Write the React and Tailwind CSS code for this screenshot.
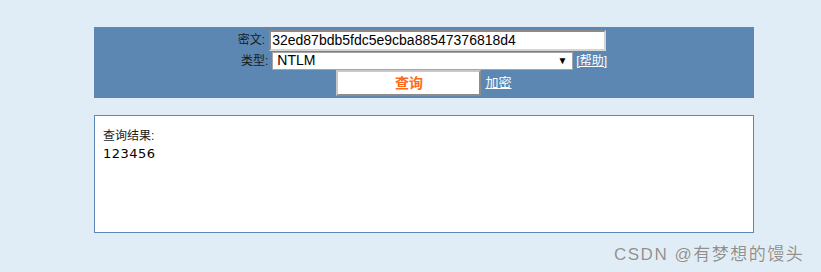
import React from 'react';

const App = () => {
  return (
    <div className="w-[821px] h-[272px] bg-[#e1edf6] relative overflow-hidden" style={{ fontFamily: '"Liberation Sans", "Noto Sans CJK SC", sans-serif' }}>
      <div className="ml-[94px] pt-[27px] w-[660px]">
        <div className="bg-[#5b87b2] h-[71px] pt-[3px] flex flex-col items-center">
          <div className="flex items-center h-[20px] mr-[4px]">
            <span className="text-[12px] text-[#1a1a1a] mr-[4px]">密文:</span>
            <div className="w-[337px] h-[21px] bg-white border-2 border-t-[#8a8a8a] border-l-[#8a8a8a] border-b-[#d4d4d4] border-r-[#d4d4d4] flex items-center px-[1px] text-[14px] text-black">
              32ed87bdb5fdc5e9cba88547376818d4
            </div>
          </div>
          <div className="flex items-center h-[19px] mt-[1px]">
            <span className="text-[12px] text-[#1a1a1a] mr-[4px]">类型:</span>
            <div className="w-[301px] h-[18px] bg-white border border-[#a5a5a5] flex items-center justify-between pl-[4px] pr-[5px] text-[14px] text-black">
              <span>NTLM</span>
              <span className="text-[10px]">▼</span>
            </div>
            <a className="ml-[3px] text-[12px] text-white underline">[帮助]</a>
          </div>
          <div className="flex items-center">
            <div className="w-[145px] h-[26px] bg-white border-2 border-t-[#c8c8c8] border-l-[#c8c8c8] border-b-[#8c8c8c] border-r-[#8c8c8c] flex items-center justify-center text-[14px] font-bold text-[#ff6a1a]">
              查询
            </div>
            <a className="ml-[4px] text-[13px] text-white underline">加密</a>
          </div>
        </div>
        <div className="mt-[17px] h-[118px] bg-white border border-[#5b88b8] px-[8px] pt-[12px]">
          <div className="text-[12px] text-[#1a1a1a] leading-[16px]">查询结果:</div>
          <div className="text-[13px] text-black leading-[16px] mt-[2px]" style={{ fontFamily: '"DejaVu Sans", sans-serif', letterSpacing: '0.5px' }}>123456</div>
        </div>
      </div>
      <div className="absolute left-[614px] top-[242px] text-[17px] tracking-[1.5px] text-[#8f8f8f] [text-shadow:0_0_1px_#ffffff]">
        CSDN @有梦想的馒头
      </div>
    </div>
  );
};

export default App;
